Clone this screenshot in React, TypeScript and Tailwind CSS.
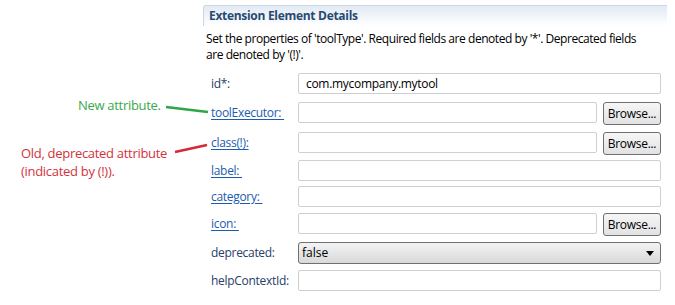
import React from "react";

type Row = {
  label: string;
  link?: boolean;
  value?: string;
  browse?: boolean;
  select?: boolean;
  gap: string;
};

const rows: Row[] = [
  { label: "id*:", value: "com.mycompany.mytool", gap: "mt-[0px]" },
  { label: "toolExecutor: ", link: true, browse: true, gap: "mt-[8px]" },
  { label: "class(!):", link: true, browse: true, gap: "mt-[9px]" },
  { label: "label: ", link: true, gap: "mt-[7px]" },
  { label: "category: ", link: true, gap: "mt-[5px]" },
  { label: "icon: ", link: true, browse: true, gap: "mt-[6px]" },
  { label: "deprecated:", select: true, gap: "mt-[8px]" },
  { label: "helpContextId:", gap: "mt-[7px]" },
];

const Field = ({ value }: { value?: string }) => (
  <div className="flex-1 h-[21px] border border-[#cfcfcf] rounded-[2px] bg-white px-[7px] flex items-center text-[12px] text-black tracking-[-0.3px]">
    {value}
  </div>
);

const Browse = () => (
  <button className="w-[58px] h-[23px] shrink-0 border border-[#707070] rounded-[3px] bg-gradient-to-b from-[#f6f6f6] to-[#e2e2e2] text-[12px] text-black tracking-[-0.3px] flex items-center justify-center">
    Browse...
  </button>
);

const Select = () => (
  <div className="flex-1 h-[22px] border border-[#707070] rounded-[3px] bg-gradient-to-b from-[#f3f3f3] to-[#d9d9d9] pl-[3px] pr-[6px] flex items-center justify-between text-[12px] text-black">
    <span>false</span>
    <svg width="8" height="5" viewBox="0 0 8 5">
      <path d="M0 0 L8 0 L4 5 Z" fill="#000" />
    </svg>
  </div>
);

export default function App() {
  return (
    <div className="relative w-[675px] h-[305px] bg-white font-['Open_Sans',sans-serif] overflow-hidden">
      <div className="pl-[203px] pr-[8px] pt-[5px]">
        <div className="h-[21px] border-t border-l border-[#cdd7e4] rounded-tl-[3px] bg-gradient-to-b from-[#e2eaf4] to-white pl-[5px] flex items-center">
          <span className="text-[12px] font-bold text-[#274a72] tracking-[-0.3px]">
            Extension Element Details
          </span>
        </div>
        <p className="mt-[5px] pl-[3px] text-[12px] leading-[16px] text-black tracking-[-0.45px] w-[452px]">
          Set the properties of 'toolType'. Required fields are denoted by '*'. Deprecated fields are denoted by '(!)'.
        </p>

        <div className="mt-[10px] flex flex-col pl-[8px] pr-[6px]">
          {rows.map((r) => (
            <div key={r.label} className={`flex items-start h-[21px] ${r.gap}`}>
              <div className="w-[87px] h-[21px] shrink-0 flex items-center text-[12px] tracking-[-0.3px]">
                {r.link ? (
                  <span className="whitespace-pre text-[#1c5cae] underline underline-offset-[2px]">
                    {r.label}
                  </span>
                ) : (
                  <span className="text-[#25406a]">{r.label}</span>
                )}
              </div>
              <div className="flex-1 flex items-start gap-[6px]">
                {r.select ? <Select /> : <Field value={r.value} />}
                {r.browse && <Browse />}
              </div>
            </div>
          ))}
        </div>
      </div>

      <span className="absolute left-[78px] top-[97px] text-[13px] leading-[16px] text-[#3aa84e] tracking-[-0.3px]">
        New attribute.
      </span>
      <div className="absolute left-[21px] top-[144px] flex flex-col text-[13px] leading-[18px] text-[#d5323c] tracking-[-0.3px]">
        <span>Old, deprecated attribute</span>
        <span>(indicated by (!)).</span>
      </div>
      <svg className="absolute left-0 top-0" width="675" height="305">
        <path d="M166 107 L208 112" stroke="#2fa547" strokeWidth="2.5" />
        <path d="M175 152 L207 145" stroke="#d42a35" strokeWidth="2.5" />
      </svg>
    </div>
  );
}
